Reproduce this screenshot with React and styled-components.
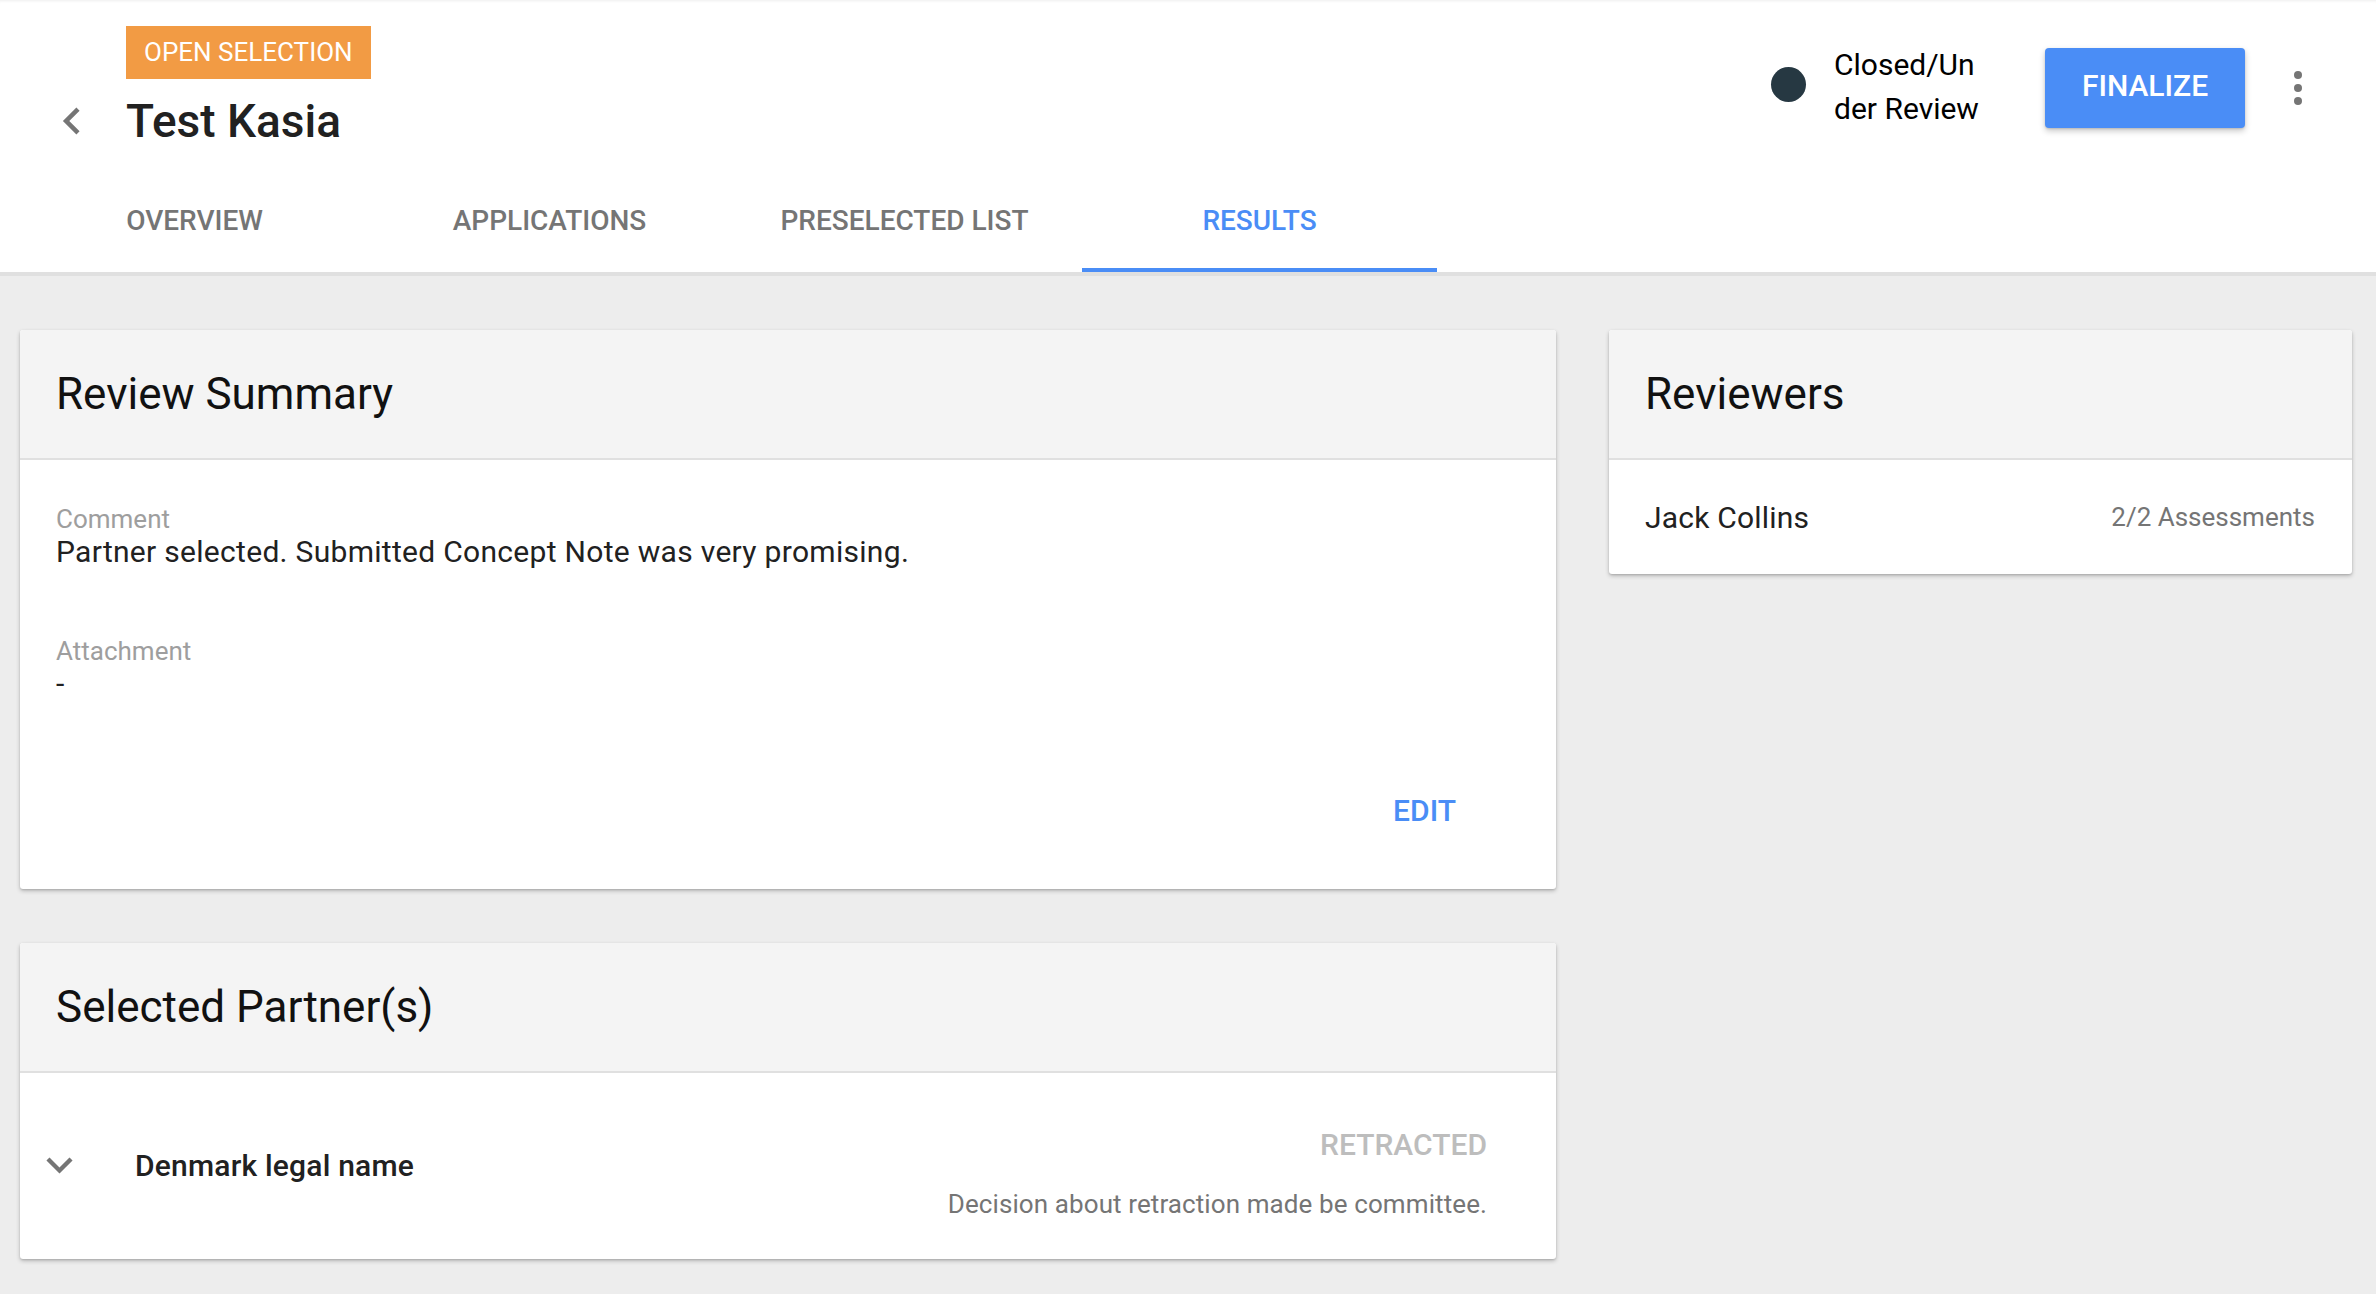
import React from 'react'
import styled, { createGlobalStyle } from 'styled-components'

const GlobalStyle = createGlobalStyle`
  html, body {
    margin: 0;
    padding: 0;
    background-color: #ededed;
    font-family: Roboto, "Liberation Sans", Arial, sans-serif;
    color: #212121;
  }
  * {
    box-sizing: border-box;
  }
`;

// header
const Header = styled.header`
  background-color: #fff;
  border-bottom: 4px solid #e0e0e0;
  box-shadow: inset 0 3px 3px -2px rgba(0, 0, 0, 0.07);
`;
const TopBar = styled.div`
  display: flex;
  justify-content: space-between;
  height: 168px;
`;
const TitleGrid = styled.div`
  display: grid;
  grid-template-columns: 64px auto;
  grid-template-rows: 53px 54px;
  row-gap: 15px;
  padding: 26px 0 0 62px;
  align-items: center;
`;
const Badge = styled.div`
  grid-column: 2;
  justify-self: start;
  height: 53px;
  display: flex;
  align-items: center;
  padding: 0 18px 2px;
  background-color: #f29b44;
  color: #fff;
  font-size: 26px;
  font-weight: 400;
`;
const BackButton = styled.div`
  grid-column: 1;
  display: flex;
  align-items: center;
`;
const Title = styled.h1`
  margin: 0;
  font-size: 46px;
  line-height: 54px;
  font-weight: 500;
  color: #212121;
`;
const Actions = styled.div`
  display: flex;
  align-items: center;
  height: 80px;
  margin-top: 48px;
  padding-right: 54px;
`;
const StatusDot = styled.span`
  width: 35px;
  height: 35px;
  border-radius: 50%;
  background-color: #263842;
  margin-bottom: 8px;
`;
const StatusText = styled.div`
  width: 150px;
  margin-left: 28px;
  margin-bottom: 2px;
  font-size: 30px;
  line-height: 44px;
  color: #000;
  word-break: break-all;
`;
const FinalizeButton = styled.button`
  width: 200px;
  height: 80px;
  margin-left: 61px;
  padding: 0 0 5px;
  border: 0;
  border-radius: 4px;
  background-color: #4a8df6;
  color: #fff;
  font-family: inherit;
  font-size: 30px;
  font-weight: 500;
  box-shadow: 0 3px 6px rgba(0, 0, 0, 0.22), 0 1px 2px rgba(0, 0, 0, 0.12);
`;
const MoreButton = styled.div`
  width: 48px;
  height: 48px;
  margin-left: 29px;
  display: flex;
  align-items: center;
  justify-content: center;
`;

// tabs
const TabBar = styled.nav`
  display: flex;
  padding-left: 17px;
  height: 104px;
`;
const Tab = styled.div`
  width: 355px;
  display: flex;
  align-items: center;
  justify-content: center;
  padding-top: 4px;
  font-size: 28px;
  font-weight: 500;
  color: ${(p) => (p.active ? '#4a8df6' : '#757575')};
  border-bottom: 4px solid ${(p) => (p.active ? '#4a8df6' : 'transparent')};
`;

// content
const Content = styled.main`
  display: grid;
  grid-template-columns: 1536px 743px;
  column-gap: 53px;
  align-items: start;
  padding: 54px 24px 40px 20px;
`;
const Column = styled.div`
  display: flex;
  flex-direction: column;
  gap: 54px;
`;
const Card = styled.section`
  background-color: #fff;
  border-radius: 3px;
  overflow: hidden;
  box-shadow: 0 2px 4px rgba(0, 0, 0, 0.22), 0 1px 2px rgba(0, 0, 0, 0.12);
`;
const CardHeader = styled.div`
  height: 130px;
  display: flex;
  align-items: center;
  padding: 0 36px;
  background-color: #f4f4f4;
  border-bottom: 2px solid #e0e0e0;
  > h2 {
    margin: 0;
    font-size: 44px;
    font-weight: 400;
    color: #111;
  }
`;
const SummaryBody = styled.div`
  padding: 44px 84px 43px 36px;
`;
const Field = styled.div`
  margin-bottom: ${(p) => p.gap || 0}px;
`;
const Label = styled.div`
  font-size: 26px;
  line-height: 30px;
  color: #9e9e9e;
`;
const Value = styled.div`
  font-size: 30px;
  line-height: 36px;
  letter-spacing: 0.3px;
  color: #212121;
`;
const CardActions = styled.div`
  display: flex;
  justify-content: flex-end;
  margin-top: 72px;
`;
const TextButton = styled.button`
  height: 72px;
  padding: 0 16px;
  border: 0;
  background: transparent;
  color: #4a8df6;
  font-family: inherit;
  font-size: 30px;
  font-weight: 500;
`;
const PartnerRow = styled.div`
  display: flex;
  padding: 54px 69px 40px 26px;
`;
const PartnerName = styled.div`
  display: flex;
  align-items: center;
  align-self: center;
  margin-bottom: 16px;
  > span {
    margin-left: 62px;
    font-size: 30px;
    font-weight: 500;
    letter-spacing: 0.2px;
    color: #212121;
  }
`;
const PartnerStatus = styled.div`
  margin-left: auto;
  display: flex;
  flex-direction: column;
  align-items: flex-end;
  gap: 26px;
`;
const Retracted = styled.div`
  font-size: 30px;
  line-height: 36px;
  font-weight: 500;
  color: #bdbdbd;
`;
const Note = styled.div`
  font-size: 26px;
  line-height: 30px;
  letter-spacing: 0.1px;
  color: #757575;
`;
const ReviewerRow = styled.div`
  height: 114px;
  display: flex;
  align-items: center;
  justify-content: space-between;
  padding: 0 37px 0 36px;
`;
const ReviewerName = styled.div`
  font-size: 30px;
  letter-spacing: 0.2px;
  color: #212121;
`;
const ReviewerCount = styled.div`
  font-size: 26px;
  color: #757575;
`;

const tabs = ['OVERVIEW', 'APPLICATIONS', 'PRESELECTED LIST', 'RESULTS']

const App = () => {
  return (
    <>
      <GlobalStyle />
      <Header>
        <TopBar>
          <TitleGrid>
            <Badge>OPEN SELECTION</Badge>
            <BackButton>
              <svg width="18" height="28" viewBox="7.6 5.3 8 12.4">
                <path d="M15.41 16.09l-4.58-4.59 4.58-4.59L14 5.5l-6 6 6 6z" fill="#757575" />
              </svg>
            </BackButton>
            <Title>Test Kasia</Title>
          </TitleGrid>
          <Actions>
            <StatusDot />
            <StatusText>Closed/Under Review</StatusText>
            <FinalizeButton>FINALIZE</FinalizeButton>
            <MoreButton>
              <svg width="8" height="34" viewBox="0 0 8 34">
                <circle cx="4" cy="4" r="4" fill="#757575" />
                <circle cx="4" cy="17" r="4" fill="#757575" />
                <circle cx="4" cy="30" r="4" fill="#757575" />
              </svg>
            </MoreButton>
          </Actions>
        </TopBar>
        <TabBar>
          {tabs.map((t) => (
            <Tab key={t} active={t === 'RESULTS'}>{t}</Tab>
          ))}
        </TabBar>
      </Header>
      <Content>
        <Column>
          <Card>
            <CardHeader><h2>Review Summary</h2></CardHeader>
            <SummaryBody>
              <Field gap={66}>
                <Label>Comment</Label>
                <Value>Partner selected. Submitted Concept Note was very promising.</Value>
              </Field>
              <Field>
                <Label>Attachment</Label>
                <Value>-</Value>
              </Field>
              <CardActions>
                <TextButton>EDIT</TextButton>
              </CardActions>
            </SummaryBody>
          </Card>
          <Card>
            <CardHeader><h2>Selected Partner(s)</h2></CardHeader>
            <PartnerRow>
              <PartnerName>
                <svg width="27" height="17" viewBox="5.8 8.4 12.4 7.8">
                  <path d="M16.59 8.59L12 13.17 7.41 8.59 6 10l6 6 6-6z" fill="#757575" />
                </svg>
                <span>Denmark legal name</span>
              </PartnerName>
              <PartnerStatus>
                <Retracted>RETRACTED</Retracted>
                <Note>Decision about retraction made be committee.</Note>
              </PartnerStatus>
            </PartnerRow>
          </Card>
        </Column>
        <Column>
          <Card>
            <CardHeader><h2>Reviewers</h2></CardHeader>
            <ReviewerRow>
              <ReviewerName>Jack Collins</ReviewerName>
              <ReviewerCount>2/2 Assessments</ReviewerCount>
            </ReviewerRow>
          </Card>
        </Column>
      </Content>
    </>
  )
}

export default App
